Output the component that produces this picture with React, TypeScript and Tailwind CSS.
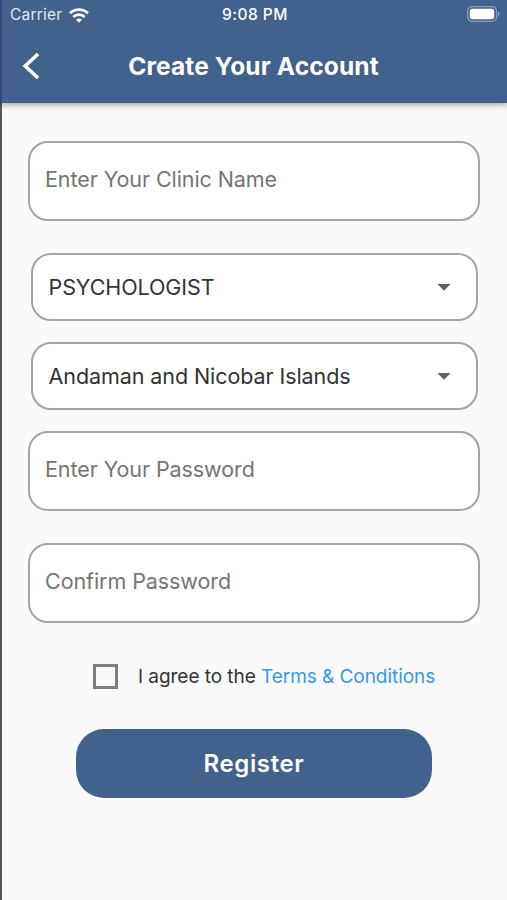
import React, { useState } from 'react';

const WifiIcon = () => (
  <svg className="w-5 h-[15px]" viewBox="0 0 20 15" fill="none" stroke="#fff" strokeWidth="2.8">
    <path d="M1 5.2C6 .4 14 .4 19 5.2" />
    <path d="M4.2 8.9c3.3-3.1 8.3-3.1 11.6 0" />
    <path d="M10 14.8l-3-3.1c1.7-1.6 4.3-1.6 6 0z" fill="#fff" stroke="none" />
  </svg>
);

const BatteryIcon = () => (
  <svg className="w-[33px] h-4" viewBox="0 0 33 16" fill="none">
    <rect x="0.7" y="0.7" width="28.8" height="14.6" rx="4.4" stroke="#fff" strokeOpacity="0.4" strokeWidth="1.2" />
    <rect x="2.8" y="2.8" width="24.4" height="10.4" rx="2.6" fill="#fff" />
    <path d="M31 5.8c1.9.6 1.9 3.8 0 4.4z" fill="#fff" fillOpacity="0.45" />
  </svg>
);

const Field = ({ label }: { label: string }) => (
  <div className="h-20 w-[452px] rounded-[20px] border-2 border-[#a4a4a4] bg-white pl-[15px] pt-[21px]">
    <span className="block text-[21.5px] leading-[30px] tracking-[-0.08px] text-[#757575]">{label}</span>
  </div>
);

const Dropdown = ({ value }: { value: string }) => (
  <button className="flex h-[68px] w-[447px] items-center justify-between rounded-[20px] border-2 border-[#a4a4a4] bg-white pl-4 pr-[25px]">
    <span className="pb-px text-[21.5px] leading-[30px] tracking-[-0.08px] text-[#333]">{value}</span>
    <svg className="h-[7px] w-[14px]" viewBox="0 0 14 7">
      <path d="M0.4 0h13.2L7 6.8z" fill="#616161" />
    </svg>
  </button>
);

const App = () => {
  const [agreed, setAgreed] = useState(false);

  return (
    <div className="flex h-[900px] w-[507px] flex-col overflow-hidden bg-[#fafafa] font-['Inter','Liberation_Sans',sans-serif]">
      {/* Header */}
      <header className="z-10 h-[103px] shrink-0 border-l-2 border-[#2f4a73] bg-[#42618c] text-white shadow-[0_2px_6px_rgba(0,0,0,0.35)]">
        <div className="grid h-[30px] grid-cols-3 items-center pl-2 pr-[7px]">
          <div className="flex items-center gap-[7px]">
            <span className="text-[15.5px] tracking-[0.2px] text-white/85">Carrier</span>
            <WifiIcon />
          </div>
          <span className="text-center text-[15.5px] font-medium tracking-[0.5px]">9:08 PM</span>
          <div className="flex justify-end pb-0.5">
            <BatteryIcon />
          </div>
        </div>
        <div className="grid h-[73px] grid-cols-[60px_1fr_62px] items-center">
          <button className="pb-0.5 pl-5">
            <svg className="h-[28px] w-[18px]" viewBox="0 0 18 28" fill="none" stroke="#fff" strokeWidth="3.6">
              <path d="M16 2L3.2 14 16 26" />
            </svg>
          </button>
          <h1 className="text-center text-[24.5px] font-bold tracking-[0.13px]">Create Your Account</h1>
        </div>
      </header>

      {/* Form */}
      <main className="flex flex-1 flex-col items-center border-l-2 border-[#58585a] pr-px pt-[38px]">
        <Field label="Enter Your Clinic Name" />
        <div className="flex flex-col gap-[21px] pb-[21px] pt-8">
          <Dropdown value="PSYCHOLOGIST" />
          <Dropdown value="Andaman and Nicobar Islands" />
        </div>
        <Field label="Enter Your Password" />
        <div className="h-8 shrink-0" />
        <Field label="Confirm Password" />

        <div className="mt-10 flex h-[26px] items-start gap-5 self-start pl-[91px] pt-px">
          <button
            onClick={() => setAgreed(!agreed)}
            className={`h-[25px] w-[25px] border-3 border-[#808080] ${agreed ? 'bg-[#42618c]' : ''}`}
          />
          <p className="whitespace-nowrap text-[19px] leading-[26px] tracking-[-0.05px] text-[#333]">
            I agree to the <span className="text-[#3399ee]">Terms &amp; Conditions</span>
          </p>
        </div>

        <button className="mt-10 h-[69px] w-[356px] rounded-[28px] bg-[#42618c] text-[24px] font-semibold tracking-[0.6px] text-white">
          Register
        </button>
      </main>
    </div>
  );
};

export default App;
